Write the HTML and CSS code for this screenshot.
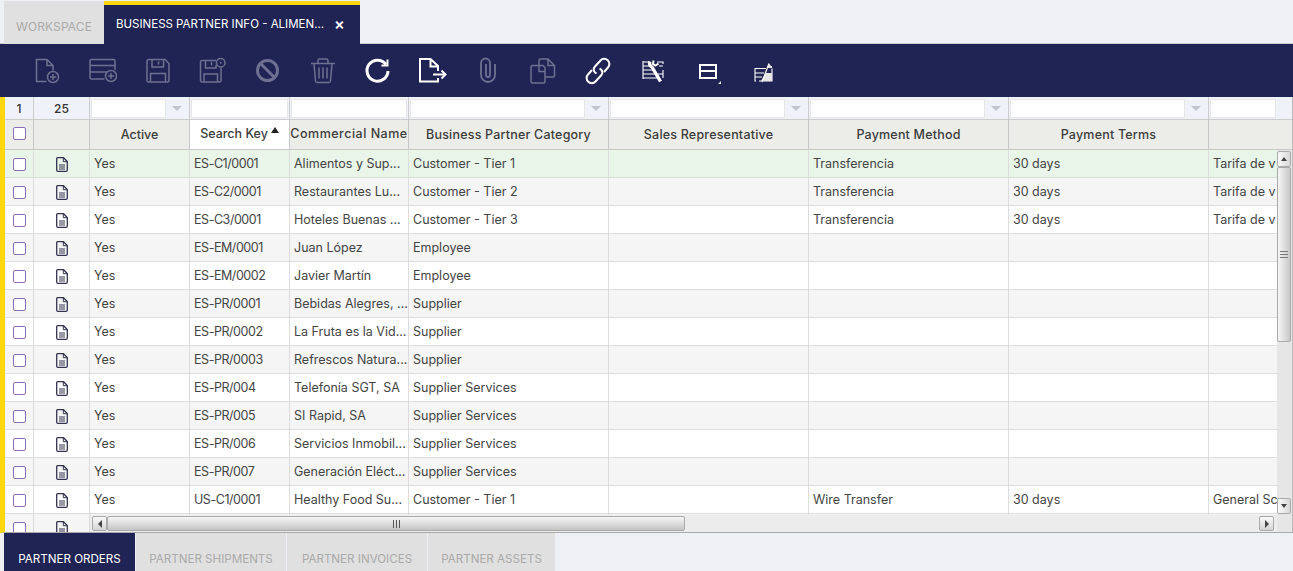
FILE: index.html
```html
<!DOCTYPE html>
<html lang="en">
<head>
<meta charset="utf-8">
<title>Business Partner Info</title>
<link rel="stylesheet" href="styles.css">
</head>
<body>
<svg class="defs" width="0" height="0" aria-hidden="true">
  <symbol id="rowdoc" viewBox="0 0 12 15">
    <path d="M1.5.7H7.5L11.3 4.5V13a1.3 1.3 0 0 1-1.3 1.3H2A1.3 1.3 0 0 1 .7 13V1.5A.8.8 0 0 1 1.5.7Z" fill="none" stroke="#33334f" stroke-width="1.3"/>
    <path d="M7.3 1V4.7H11" fill="none" stroke="#33334f"/>
    <path d="M3 8H9M3 10H9M3 12H9" stroke="#33334f"/>
  </symbol>
</svg>
<div class="tabbar">
  <div class="tab tab-off">WORKSPACE</div>
  <div class="tab tab-on"><span class="tabtext">BUSINESS PARTNER INFO - ALIMEN...</span><span class="close">×</span></div>
</div>
<div class="toolbar">
  <svg class="tool dim" viewBox="0 0 28 28"><path d="M12.5 24.5H2.5V2.5H13L19 8.5V13.5M13 2.5V8.5H19"/><circle cx="19" cy="20" r="5.5"/><path d="M16 20H22M19 17V23"/></svg>
  <svg class="tool dim" viewBox="0 0 28 28"><path d="M15.5 22H2.5A1.5 1.5 0 0 1 1 20.5V4A1.5 1.5 0 0 1 2.5 2.5H24.5A1.5 1.5 0 0 1 26 4V13M1 8.5H26M1 15H18"/><circle cx="22" cy="19" r="5.5"/><path d="M19 19H25M22 16V22"/></svg>
  <svg class="tool dim" viewBox="0 0 28 28"><path d="M4.5 2.5H21L25 6.5V23.5A1.5 1.5 0 0 1 23.5 25H4.5A1.5 1.5 0 0 1 3 23.5V4A1.5 1.5 0 0 1 4.5 2.5Z"/><path d="M6.5 25V16.5H21.5V25M8 2.5V10H19.5V2.5M14.5 4.5V7.5"/></svg>
  <svg class="tool dim" viewBox="0 0 28 28"><path d="M17 3.5H3A1.5 1.5 0 0 0 1.5 5V23.5A1.5 1.5 0 0 0 3 25H20.5A1.5 1.5 0 0 0 22 23.5V10.5"/><path d="M5 25V17H18.5V25M6.5 3.5V11H17V8M12.5 5V8.5"/><circle cx="21.7" cy="5.7" r="4.3"/><circle cx="21.7" cy="5.7" r="1" class="dot"/></svg>
  <svg class="tool dim thick" viewBox="0 0 28 28"><circle cx="13.5" cy="13.5" r="10"/><path d="M6.5 6.5L20.5 20.5"/></svg>
  <svg class="tool dim" viewBox="0 0 28 28"><path d="M2 6.500H26M9 6.500V3.500A1.500 1.500 0 0 1 10.500 2H17.500A1.500 1.500 0 0 1 19 3.500V6.500M5 6.500L6.500 24A1.800 1.800 0 0 0 8.300 25.500H19.700A1.800 1.800 0 0 0 21.500 24L23 6.500M10 10.500V21.500M14 10.500V21.500M18 10.500V21.500"/></svg>
  <svg class="tool live thick" viewBox="0 0 28 28"><path d="M22 7.500A10.500 10.500 0 1 0 24 14"/><path d="M17.500 8.500H23.500V2.500" class="solid"/></svg>
  <svg class="tool live mid" viewBox="0 0 28 28"><path d="M19 14V9L11.500 2H1V24.500H19V21M11.500 2V9.500H19"/><path d="M14 17.500H26M22.500 13.500L26.500 17.500L22.500 21.500"/></svg>
  <svg class="tool dim clip" viewBox="0 0 28 28"><path d="M21 7V18A7 7 0 0 1 7 18V6A4.500 4.500 0 0 1 16 6V18A2 2 0 0 1 12 18V7"/></svg>
  <svg class="tool dim" viewBox="0 0 28 28"><path d="M14 8.500H3.500A1.500 1.500 0 0 0 2 10V24.500A1.500 1.500 0 0 0 3.500 26H14.500A1.500 1.500 0 0 0 16 24.500V10.500L14 8.500ZM10 8.500V14.500H16"/><path d="M10 8V3.500A1.500 1.500 0 0 1 11.500 2H19L25.500 8.500V18.500A1.500 1.500 0 0 1 24 20H16.500M19 2V8.500H25.500"/></svg>
  <svg class="tool live mid" viewBox="0 0 28 28"><path d="M12.500 16.500L11 15.500A4.500 4.500 0 0 1 11 9.500L16.500 3.500A5 5 0 0 1 24 10.500L20 15"/><path d="M15.500 11.500L17 12.500A4.500 4.500 0 0 1 17 18.500L11.500 24.500A5 5 0 0 1 4 17.500L8 13"/></svg>
  <svg class="tool live narrow" viewBox="0 0 28 28"><path d="M4 5H10M18 5H24V7M4 9H11M20 9H24M4 13H13M4 17H16M19 17H24M4 21H18M4 4V22M24 13V21" /><path d="M11 4.500A4 4 0 0 0 13 10L21.500 24.500" class="wrench"/><path d="M14.500 3.500L14 7L16.500 8.500L19.500 6.500" class="solid"/></svg>
  <svg class="tool live layout" viewBox="0 0 28 28"><rect x="6" y="8" width="16" height="13"/><path d="M6 14H22"/><path d="M24 27H27V24Z" class="fillw"/></svg>
  <svg class="tool live narrow" viewBox="0 0 28 28"><path d="M23 11.500V24H10M7 24H6V11.500H17M6 16H15M6 20H13"/><path d="M17 16H23V24H12Z" class="fillw"/><path d="M20 6.500L13 25" class="wide"/><path d="M18 9H20V6.500L22 9H23V11H18Z" class="fillw"/></svg>
</div>
<main class="gridwrap">
  <div class="gridclip">
    <table class="grid">
      <colgroup>
        <col class="c-sel"><col class="c-doc"><col class="c-m"><col class="c-m"><col class="c-name"><col class="c-l"><col class="c-l"><col class="c-l"><col class="c-l"><col class="c-l">
      </colgroup>
      <thead>
        <tr class="filters">
          <th>1</th><th>25</th>
          <th><div class="fi"><span class="box"></span><span class="drop"></span></div></th>
          <th><div class="fi"><span class="box"></span></div></th>
          <th><div class="fi"><span class="box"></span></div></th>
          <th><div class="fi"><span class="box"></span><span class="drop"></span></div></th>
          <th><div class="fi"><span class="box"></span><span class="drop"></span></div></th>
          <th><div class="fi"><span class="box"></span><span class="drop"></span></div></th>
          <th><div class="fi"><span class="box"></span><span class="drop"></span></div></th>
          <th><div class="fi short"><span class="box"></span></div></th>
        </tr>
        <tr class="heads">
          <th class="raise"><span class="chk"></span></th><th></th><th class="plain">Active</th>
          <th class="sorted plain"><span class="raise-t">Search Key</span><span class="tri"></span></th>
          <th class="tight"><span class="raise-t">Commercial Name</span></th>
          <th>Business Partner Category</th><th>Sales Representative</th><th>Payment Method</th><th>Payment Terms</th><th></th>
        </tr>
      </thead>
      <tbody>
        <tr class="sel"><td class="ck"><span class="chk"></span></td><td class="dc"><svg class="rd"><use href="#rowdoc"/></svg></td><td>Yes</td><td>ES-C1/0001</td><td>Alimentos y Sup...</td><td>Customer - Tier 1</td><td></td><td>Transferencia</td><td>30 days</td><td>Tarifa de v</td></tr>
        <tr class="alt"><td class="ck"><span class="chk"></span></td><td class="dc"><svg class="rd"><use href="#rowdoc"/></svg></td><td>Yes</td><td>ES-C2/0001</td><td>Restaurantes Lu...</td><td>Customer - Tier 2</td><td></td><td>Transferencia</td><td>30 days</td><td>Tarifa de v</td></tr>
        <tr><td class="ck"><span class="chk"></span></td><td class="dc"><svg class="rd"><use href="#rowdoc"/></svg></td><td>Yes</td><td>ES-C3/0001</td><td>Hoteles Buenas ...</td><td>Customer - Tier 3</td><td></td><td>Transferencia</td><td>30 days</td><td>Tarifa de v</td></tr>
        <tr class="alt"><td class="ck"><span class="chk"></span></td><td class="dc"><svg class="rd"><use href="#rowdoc"/></svg></td><td>Yes</td><td>ES-EM/0001</td><td>Juan López</td><td>Employee</td><td></td><td></td><td></td><td></td></tr>
        <tr><td class="ck"><span class="chk"></span></td><td class="dc"><svg class="rd"><use href="#rowdoc"/></svg></td><td>Yes</td><td>ES-EM/0002</td><td>Javier Martín</td><td>Employee</td><td></td><td></td><td></td><td></td></tr>
        <tr class="alt"><td class="ck"><span class="chk"></span></td><td class="dc"><svg class="rd"><use href="#rowdoc"/></svg></td><td>Yes</td><td>ES-PR/0001</td><td>Bebidas Alegres, ...</td><td>Supplier</td><td></td><td></td><td></td><td></td></tr>
        <tr><td class="ck"><span class="chk"></span></td><td class="dc"><svg class="rd"><use href="#rowdoc"/></svg></td><td>Yes</td><td>ES-PR/0002</td><td>La Fruta es la Vid...</td><td>Supplier</td><td></td><td></td><td></td><td></td></tr>
        <tr class="alt"><td class="ck"><span class="chk"></span></td><td class="dc"><svg class="rd"><use href="#rowdoc"/></svg></td><td>Yes</td><td>ES-PR/0003</td><td>Refrescos Natura...</td><td>Supplier</td><td></td><td></td><td></td><td></td></tr>
        <tr><td class="ck"><span class="chk"></span></td><td class="dc"><svg class="rd"><use href="#rowdoc"/></svg></td><td>Yes</td><td>ES-PR/004</td><td>Telefonía SGT, SA</td><td>Supplier Services</td><td></td><td></td><td></td><td></td></tr>
        <tr class="alt"><td class="ck"><span class="chk"></span></td><td class="dc"><svg class="rd"><use href="#rowdoc"/></svg></td><td>Yes</td><td>ES-PR/005</td><td>SI Rapid, SA</td><td>Supplier Services</td><td></td><td></td><td></td><td></td></tr>
        <tr><td class="ck"><span class="chk"></span></td><td class="dc"><svg class="rd"><use href="#rowdoc"/></svg></td><td>Yes</td><td>ES-PR/006</td><td>Servicios Inmobil...</td><td>Supplier Services</td><td></td><td></td><td></td><td></td></tr>
        <tr class="alt"><td class="ck"><span class="chk"></span></td><td class="dc"><svg class="rd"><use href="#rowdoc"/></svg></td><td>Yes</td><td>ES-PR/007</td><td>Generación Eléct...</td><td>Supplier Services</td><td></td><td></td><td></td><td></td></tr>
        <tr><td class="ck"><span class="chk"></span></td><td class="dc"><svg class="rd"><use href="#rowdoc"/></svg></td><td>Yes</td><td>US-C1/0001</td><td>Healthy Food Su...</td><td>Customer - Tier 1</td><td></td><td>Wire Transfer</td><td>30 days</td><td>General Sc</td></tr>
        <tr class="alt"><td class="ck"><span class="chk"></span></td><td class="dc"><svg class="rd"><use href="#rowdoc"/></svg></td><td></td><td></td><td></td><td></td><td></td><td></td><td></td><td></td></tr>
      </tbody>
    </table>
  </div>
  <div class="vscroll">
    <span class="sbtn"><i class="ar up"></i></span>
    <span class="vthumb"><i class="grip-h"></i></span>
    <span class="vtrack"></span>
    <span class="sbtn"><i class="ar down"></i></span>
  </div>
  <div class="hscroll">
    <span class="sbtn-h"><i class="ar left"></i></span>
    <span class="hthumb"><i class="grip-v"></i></span>
    <span class="htrack"></span>
    <span class="sbtn-h"><i class="ar right"></i></span>
  </div>
</main>
<div class="subtabs">
  <div class="stab stab-on">PARTNER ORDERS</div>
  <div class="stab w1">PARTNER SHIPMENTS</div>
  <div class="stab w2">PARTNER INVOICES</div>
  <div class="stab w3">PARTNER ASSETS</div>
</div>
</body>
</html>
```
FILE: styles.css
```css
* { box-sizing: border-box; }
html, body { margin: 0; padding: 0; }
body {
  width: 1293px;
  height: 571px;
  overflow: hidden;
  background: #eef0f6;
  font-family: Inter, "Liberation Sans", sans-serif;
  font-size: 12px;
  color: #444;
  display: flex;
  flex-direction: column;
}
.defs { position: absolute; }

.tabbar {
  height: 44px;
  flex: none;
  display: flex;
  align-items: stretch;
  padding: 1px 0 0 4px;
  border-bottom: 1px solid #ccc;
  font-size: 12px;
}
.tab { display: flex; align-items: center; }
.tab-off {
  width: 100px;
  margin-bottom: -1px;
  background: #e0e0e0;
  color: #aaa;
  justify-content: center;
  padding-top: 8px;
  letter-spacing: .1px;
}
.tab-on {
  width: 256px;
  margin-bottom: -1px;
  background: #202454;
  border-top: 4px solid #ffd70f;
  color: #fff;
  padding: 0 0 2px 12px;
  justify-content: flex-start;
  white-space: nowrap;
}
.tabtext { width: 218px; flex: none; font-size: 11.5px; }
.close { font-size: 16px; font-weight: 600; line-height: 1; }

.toolbar {
  height: 53px;
  flex: none;
  background: #202454;
  display: flex;
  align-items: flex-start;
  padding: 13px 0 0 34px;
  gap: 27px;
}
.tool { width: 28px; height: 28px; flex: none; fill: none; stroke-width: 1.5; }
.dim { stroke: #6d7090; }
.live { stroke: #fff; }
.thick { stroke-width: 3; }
.mid { stroke-width: 2; }
.clip { stroke-width: 1.8; }
.narrow { stroke-width: 1.1; }
.layout { stroke-width: 2; }
.tool .solid { stroke-width: 2; }
.tool .wrench { stroke-width: 3.4; stroke: #fff; }
.tool .dot { fill: #6d7090; stroke: none; }
.tool .fillw { fill: #e6e6e6; stroke: none; }
.tool .wide { stroke-width: 1.2; }

.gridwrap {
  position: relative;
  height: 436px;
  flex: none;
  background: #fff;
  border-left: 5px solid #ffd70f;
  border-bottom: 1px solid #aaa;
  border-right: 1px solid #bbb;
}
.gridclip { height: 435px; overflow: hidden; }
.grid {
  table-layout: fixed;
  width: 1402px;
  border-collapse: separate;
  border-spacing: 0;
}
.c-sel { width: 29px; }
.c-doc { width: 56px; }
.c-m { width: 100px; }
.c-name { width: 119px; }
.c-l { width: 200px; }
.grid th, .grid td {
  padding: 0;
  border-right: 1px solid #dcdcdc;
  border-bottom: 1px solid #dcdcdc;
  overflow: hidden;
  white-space: nowrap;
}
.filters th {
  height: 23px;
  background: #eff2f8;
  font-weight: 500;
  color: #333;
  text-align: center;
  font-size: 12px;
  border-color: #ccc;
}
.fi { display: flex; height: 19px; padding: 0 1px; }
.box { flex: 1; background: #fff; border: 1px solid #e6e6e6; }
.short .box { flex: none; width: 66px; }
.drop { width: 22px; position: relative; }
.drop::after {
  content: "";
  position: absolute;
  left: 6px;
  top: 7px;
  border-style: solid;
  border-width: 5px 5px 0;
  border-color: #c0c4cc transparent transparent;
}
.heads th {
  height: 30px;
  background: #ecede8;
  font-weight: 500;
  color: #3c3c3c;
  text-align: center;
  font-size: 12.5px;
  letter-spacing: .2px;
  border-color: #c8c8c8;
}
.heads .plain { letter-spacing: 0; }
.heads .tight { letter-spacing: .5px; }
.heads .sorted { background: #fff; }
.heads .raise { padding-bottom: 5px; }
.raise-t { position: relative; top: -1px; }
.tri {
  display: inline-block;
  margin: 0 0 6px 3px;
  border-style: solid;
  border-width: 0 4px 6px;
  border-color: transparent transparent #222;
}
.grid td {
  height: 28px;
  padding-left: 4px;
  color: #444;
  font-size: 12.5px;
  background: #fff;
}
.grid td:nth-child(4) { letter-spacing: -.45px; }
.grid .alt td { background: #f5f5f5; }
.grid .sel td { background: #e8f5e8; }
.grid td.ck, .grid td.dc { padding-left: 0; text-align: center; }
.chk {
  display: inline-block;
  width: 13px;
  height: 13px;
  background: #fff;
  border: 1px solid #8a6eb6;
  border-radius: 2px;
  vertical-align: middle;
}
.rd { display: inline-block; width: 12px; height: 15px; vertical-align: middle; margin-top: 2px; }

.vscroll {
  position: absolute;
  top: 53px;
  right: 0;
  width: 15px;
  height: 382px;
  background: #e6e6e6;
  display: flex;
  flex-direction: column;
  padding: 1px 1px 18px 0;
}
.sbtn {
  height: 16px;
  flex: none;
  background: linear-gradient(90deg, #fafafa, #d8d8d8);
  border: 1px solid #aaa;
  border-radius: 2px;
  display: flex;
  align-items: center;
  justify-content: center;
}
.vthumb {
  height: 175px;
  flex: none;
  background: linear-gradient(90deg, #f6f6f6, #c9c9c9);
  border: 1px solid #aaa;
  border-radius: 2px;
  display: flex;
  align-items: center;
  justify-content: center;
}
.vtrack { flex: 1; }
.hscroll {
  position: absolute;
  left: 85px;
  bottom: 0;
  width: 1187px;
  height: 17px;
  background: #ececec;
  display: flex;
  padding: 1px 3px 1px 2px;
}
.sbtn-h {
  width: 15px;
  flex: none;
  background: linear-gradient(180deg, #fafafa, #d4d4d4);
  border: 1px solid #aaa;
  border-radius: 2px;
  display: flex;
  align-items: center;
  justify-content: center;
}
.hthumb {
  width: 578px;
  flex: none;
  background: linear-gradient(180deg, #f6f6f6, #c4c4c4);
  border: 1px solid #aaa;
  border-radius: 2px;
  display: flex;
  align-items: center;
  justify-content: center;
}
.htrack { flex: 1; }
.ar { display: block; width: 0; height: 0; border-style: solid; border-color: transparent; }
.up { border-width: 0 3px 4px; border-bottom-color: #444; }
.down { border-width: 4px 3px 0; border-top-color: #444; }
.left { border-width: 4px 4px 4px 0; border-right-color: #444; }
.right { border-width: 4px 0 4px 4px; border-left-color: #444; }
.grip-h { width: 8px; height: 7px; background: repeating-linear-gradient(180deg, #777 0 1px, transparent 1px 3px); }
.grip-v { width: 7px; height: 8px; background: repeating-linear-gradient(90deg, #555 0 1px, transparent 1px 3px); }

.subtabs {
  height: 38px;
  flex: none;
  display: flex;
  gap: 1px;
  padding-left: 4px;
  font-size: 11.6px;
}
.stab {
  background: #e0e0e0;
  color: #aaa;
  display: flex;
  align-items: center;
  justify-content: center;
  padding-top: 14px;
}
.stab-on { width: 131px; background: #202454; color: #fff; }
.w1 { width: 150px; }
.w2 { width: 140px; }
.w3 { width: 127px; }
```
